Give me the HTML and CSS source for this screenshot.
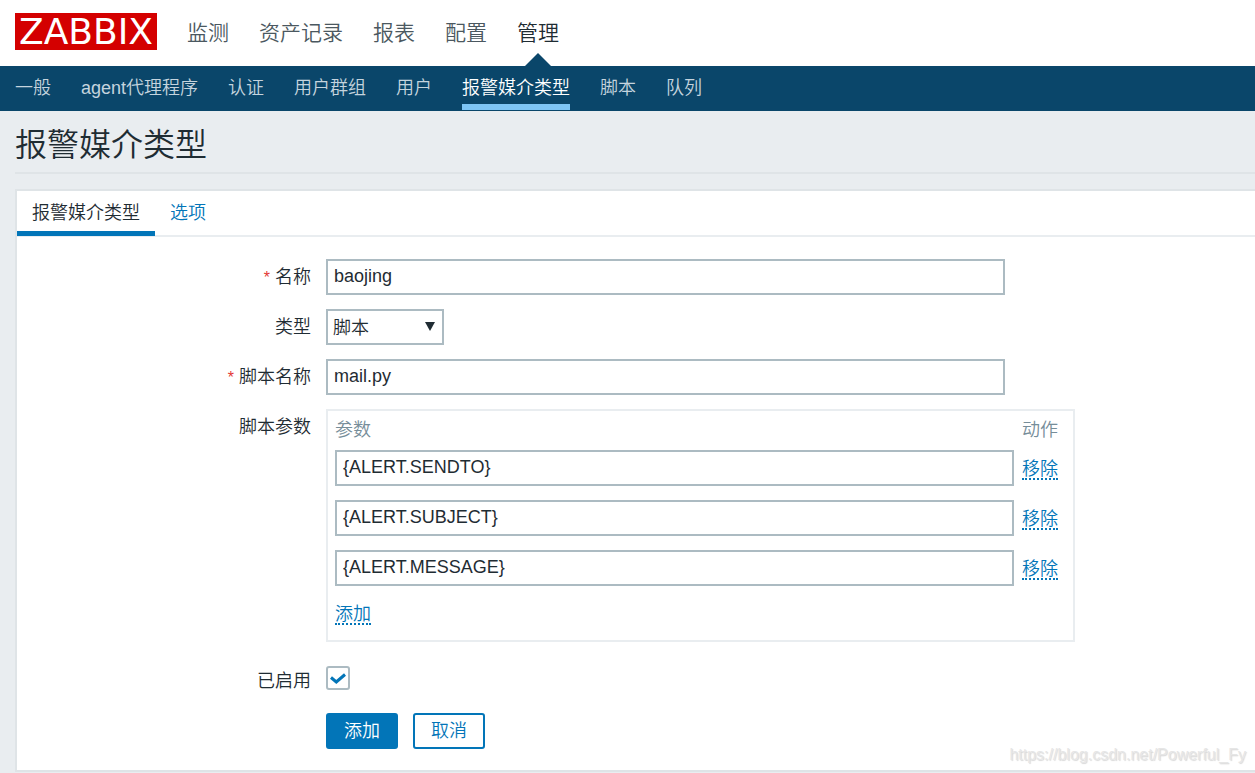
FILE: index.html
```html
<!DOCTYPE html>
<html lang="zh-CN">
<head>
<meta charset="utf-8">
<title>报警媒介类型</title>
<link rel="stylesheet" href="styles.css">
</head>
<body>
<header class="top">
  <a class="logo" href="#">ZABBIX</a>
  <nav class="main-nav">
    <a href="#">监测</a>
    <a href="#">资产记录</a>
    <a href="#">报表</a>
    <a href="#">配置</a>
    <a href="#" class="selected">管理</a>
  </nav>
</header>
<nav class="sub-nav">
  <a href="#">一般</a>
  <a href="#">agent代理程序</a>
  <a href="#">认证</a>
  <a href="#">用户群组</a>
  <a href="#">用户</a>
  <a href="#" class="selected">报警媒介类型</a>
  <a href="#">脚本</a>
  <a href="#">队列</a>
</nav>
<main class="content">
  <h1 class="title">报警媒介类型</h1>
  <form class="panel">
    <div class="tabs">
      <a href="#" class="tab active">报警媒介类型</a>
      <a href="#" class="tab">选项</a>
    </div>
    <div class="form">
      <label class="label required" for="name">名称</label>
      <input class="text" id="name" type="text" value="baojing">

      <label class="label" for="type">类型</label>
      <span class="select-wrap">
        <select class="select" id="type"><option>脚本</option></select>
      </span>

      <label class="label required" for="script">脚本名称</label>
      <input class="text" id="script" type="text" value="mail.py">

      <span class="label" id="params-label">脚本参数</span>
      <div class="params">
        <table class="params-table" aria-labelledby="params-label">
          <thead>
            <tr><th>参数</th><th>动作</th></tr>
          </thead>
          <tbody>
            <tr>
              <td><input class="text" type="text" aria-label="参数 1" value="{ALERT.SENDTO}"></td>
              <td><button type="button" class="link">移除</button></td>
            </tr>
            <tr>
              <td><input class="text" type="text" aria-label="参数 2" value="{ALERT.SUBJECT}"></td>
              <td><button type="button" class="link">移除</button></td>
            </tr>
            <tr>
              <td><input class="text" type="text" aria-label="参数 3" value="{ALERT.MESSAGE}"></td>
              <td><button type="button" class="link">移除</button></td>
            </tr>
          </tbody>
        </table>
        <button type="button" class="link">添加</button>
      </div>

      <label class="label enabled-row" for="enabled">已启用</label>
      <span class="check enabled-row">
        <input type="checkbox" id="enabled" checked>
        <svg viewBox="0 0 24 24" aria-hidden="true"><path d="M5 11.5 10.3 16 19 8.5"/></svg>
      </span>

      <div class="actions">
        <button type="submit" class="btn primary">添加</button>
        <button type="button" class="btn">取消</button>
      </div>
    </div>
  </form>
</main>
<div class="watermark">https://blog.csdn.net/Powerful_Fy</div>
</body>
</html>
```
FILE: styles.css
```css
* { box-sizing: border-box; }

body {
  margin: 0;
  position: relative;
  min-height: 100vh;
  background: #e9edf0;
  color: #1f2c33;
  font-family: "Liberation Sans", "Noto Sans CJK SC", sans-serif;
  font-size: 18px;
  font-weight: 350;
  line-height: 24px;
}

a { text-decoration: none; color: #0275b8; }

input, select, button {
  font: inherit;
  color: inherit;
  margin: 0;
}

.top {
  display: flex;
  align-items: center;
  gap: 30px;
  height: 66px;
  padding: 0 15px;
  background: #fff;
}

.logo {
  margin-top: -3px;
  padding: 0 4px;
  background: #d40000;
  color: #fff;
  font-family: "DejaVu Sans", sans-serif;
  font-size: 36px;
  font-weight: 400;
  line-height: 37px;
}

.main-nav {
  display: flex;
  align-self: stretch;
  gap: 30px;
  font-size: 21px;
}

.main-nav a {
  position: relative;
  color: #4b5860;
  line-height: 66px;
}

.main-nav .selected { color: #1f2c33; }

.main-nav .selected::after {
  content: "";
  position: absolute;
  left: 50%;
  bottom: 0;
  margin-left: -13px;
  border: 13px solid transparent;
  border-top: 0;
  border-bottom-color: #0a466a;
}

.sub-nav {
  display: flex;
  gap: 30px;
  height: 45px;
  padding: 0 15px 1px;
  background: #0a466a;
}

.sub-nav a {
  padding-top: 4px;
  border-bottom: 6px solid transparent;
  color: #c5d4de;
  line-height: 36px;
}

.sub-nav .selected {
  border-bottom-color: #7dc5f5;
  color: #fff;
}

.content { padding-left: 15px; }

.title {
  margin: 0 0 15px;
  padding: 15px 0 7px;
  border-bottom: 2px solid #dfe4e7;
  font-size: 32px;
  font-weight: 350;
  line-height: 39px;
}

.panel {
  border: 2px solid #dfe4e7;
  border-right: 0;
  background: #fff;
}

.tabs {
  display: flex;
  height: 46px;
  border-bottom: 2px solid #e9edf0;
}

.tab {
  height: 45px;
  padding: 0 15px;
  line-height: 44px;
}

.tab.active {
  border-bottom: 5px solid #0275b8;
  color: #1f2c33;
}

.form {
  display: grid;
  grid-template-columns: minmax(120px, 294px) minmax(0, 1fr);
  gap: 14px 15px;
  padding: 22px 0 21px;
}

.label {
  padding-top: 1px;
  text-align: right;
  line-height: 35px;
}

.required::before {
  content: "*";
  margin-right: 5px;
  color: #e33734;
  font-size: 16px;
  line-height: 24px;
}

.text {
  display: block;
  width: 100%;
  max-width: 679px;
  height: 36px;
  padding: 0 7px 2px 6px;
  border: 2px solid #acbbc2;
  border-radius: 0;
  background: #fff;
}

.select-wrap {
  position: relative;
  width: 118px;
}

.select {
  display: block;
  width: 100%;
  height: 36px;
  padding: 2px 5px 0;
  border: 2px solid #acbbc2;
  border-radius: 0;
  background: #fff;
  appearance: none;
}

.select-wrap::after {
  content: "";
  position: absolute;
  top: 13px;
  right: 9px;
  border: 5px solid transparent;
  border-top: 9px solid #1f2c33;
  border-bottom: 0;
  pointer-events: none;
}

.params {
  max-width: 749px;
  padding: 5px 7px 15px;
  border: 2px solid #e9edf0;
}

.params-table {
  width: 100%;
  border-collapse: collapse;
}

.params-table th {
  padding: 0;
  color: #768d99;
  font-weight: 350;
  line-height: 28px;
  text-align: left;
}

.params-table td { padding: 6px 0 8px; }

.params-table th:last-child,
.params-table td:last-child {
  width: 52px;
  padding-left: 8px;
}

.link {
  display: block;
  height: 24px;
  padding: 2px 0 0;
  border: 0;
  border-bottom: 2px dotted #0275b8;
  background: none;
  color: #0275b8;
  line-height: 22px;
  cursor: pointer;
}

.params > .link { margin-top: 7px; }

.enabled-row { margin-top: 10px; }

.check {
  position: relative;
  width: 24px;
  height: 24px;
}

.check input {
  display: block;
  width: 24px;
  height: 24px;
  border: 2px solid #acbbc2;
  border-radius: 3px;
  background: #fff;
  appearance: none;
}

.check svg {
  position: absolute;
  inset: 0;
  fill: none;
  stroke: #0275b8;
  stroke-width: 3;
  pointer-events: none;
}

.check input:not(:checked) + svg { display: none; }

.label.enabled-row {
  padding-top: 2px;
  line-height: 26px;
}

.actions {
  grid-column: 2;
  display: flex;
  gap: 15px;
  margin-top: 5px;
}

.btn {
  height: 36px;
  padding: 1px 16px 0;
  border: 2px solid #0275b8;
  border-radius: 3px;
  background: #fff;
  color: #0275b8;
  line-height: 31px;
  cursor: pointer;
}

.btn.primary {
  background: #0275b8;
  color: #fff;
}

.watermark {
  position: absolute;
  right: 9px;
  bottom: 6px;
  color: #e6e6e6;
  font-size: 16px;
  text-shadow: 1px 1px 1px #d8d8d8;
  pointer-events: none;
}
```
